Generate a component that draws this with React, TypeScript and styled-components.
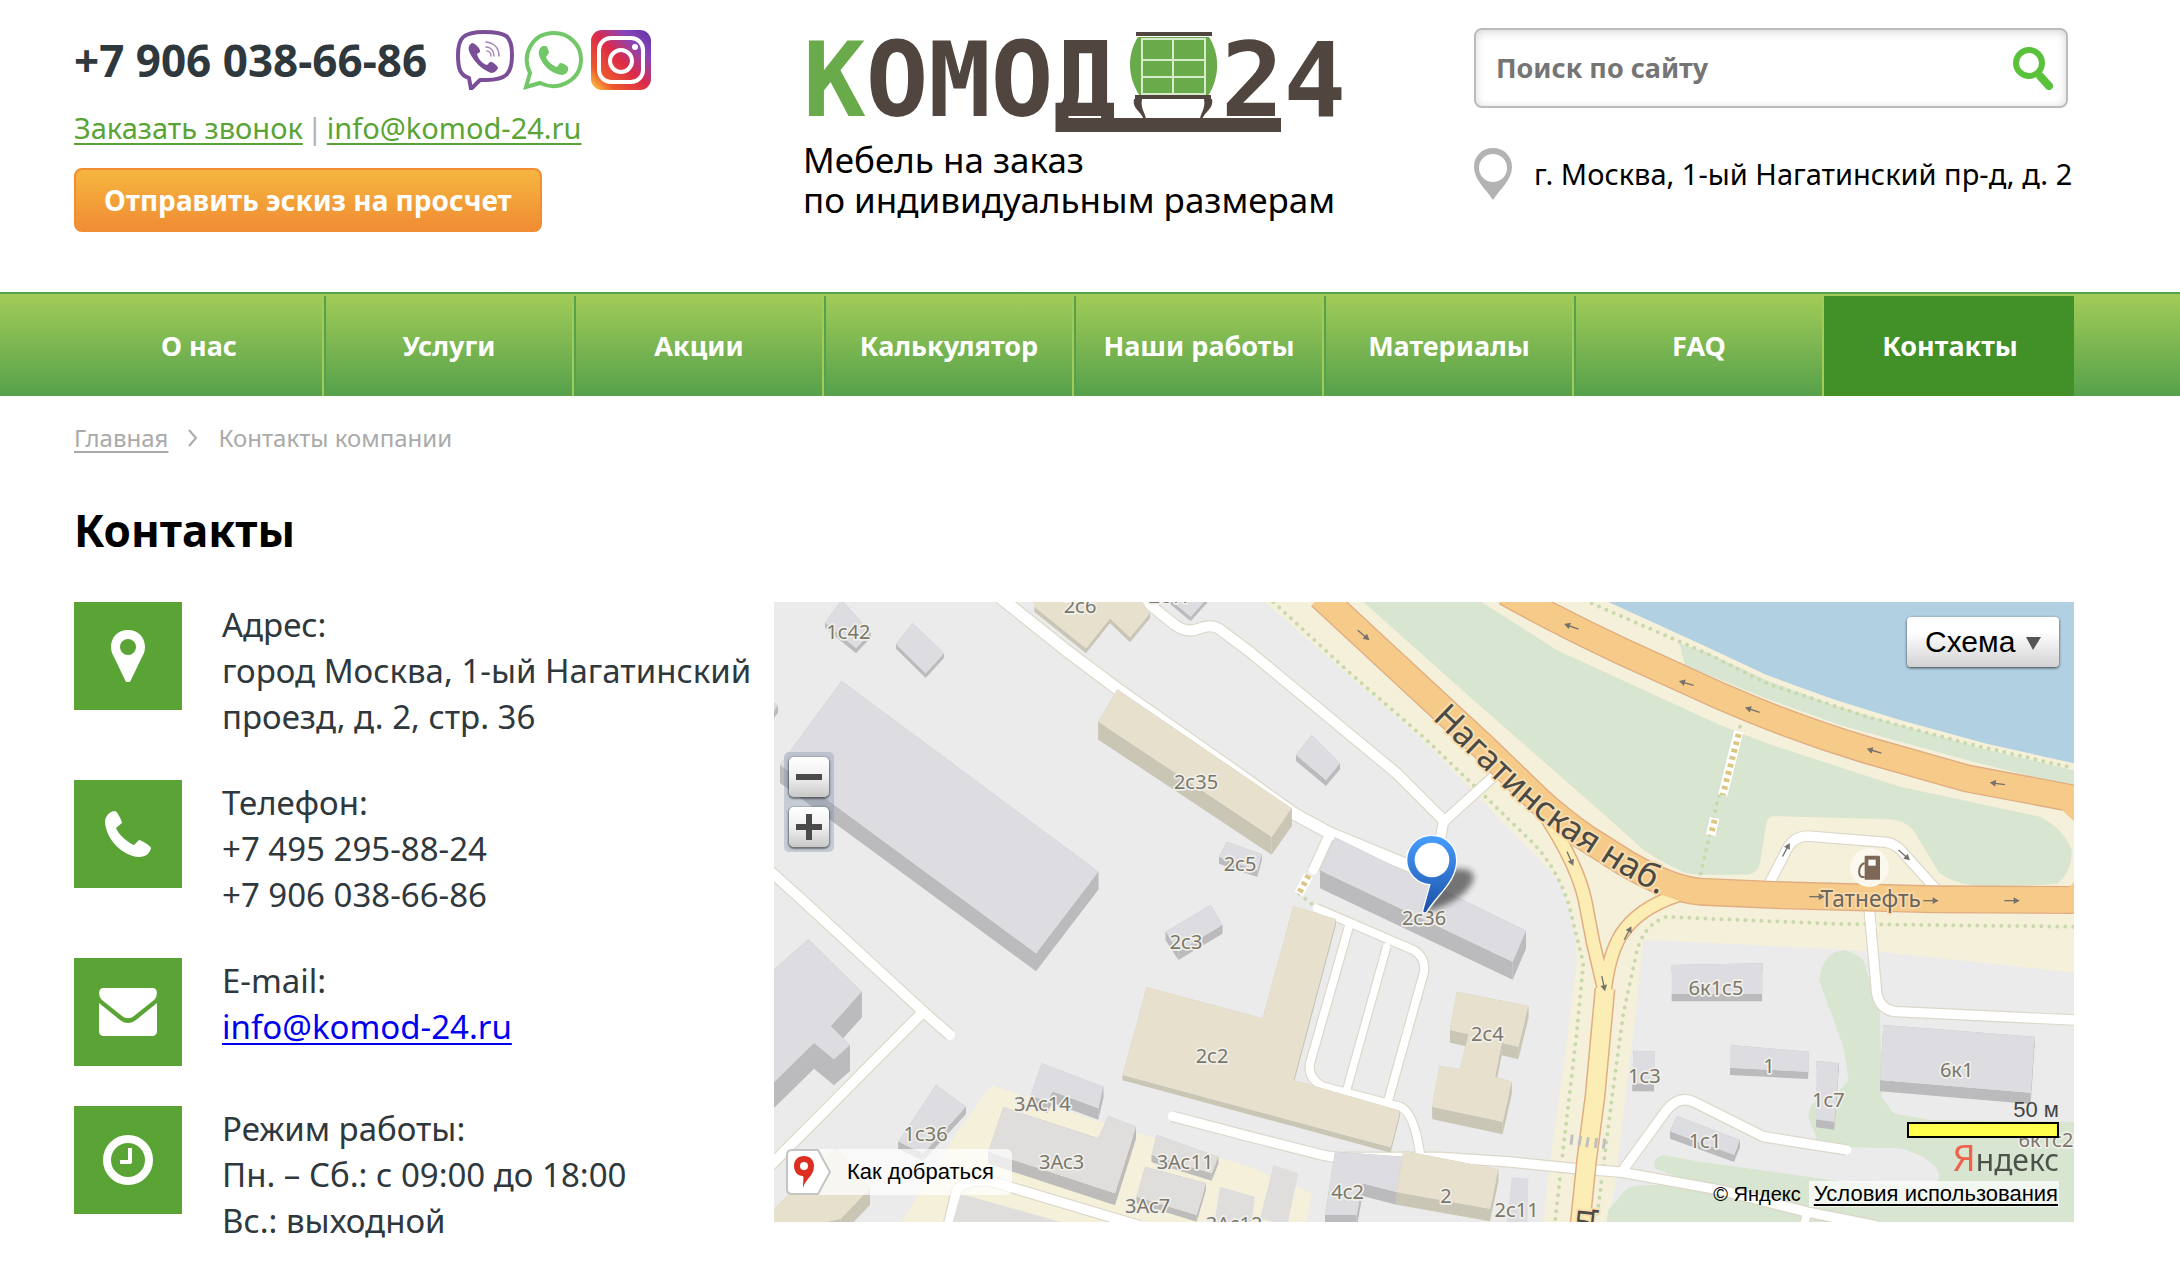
import React from "react";
import styled, { createGlobalStyle } from "styled-components";

const sans = `"Noto Sans", "Open Sans", sans-serif`;
const arial = `"Liberation Sans", Arial, sans-serif`;
const logoFace = `"DejaVu Sans Mono", monospace`;

const GlobalStyle = createGlobalStyle`
  * { box-sizing: border-box; }
  body { margin: 0; background: #fff; color: #2f383d; font-family: ${sans}; }
  h1, p { margin: 0; font-weight: inherit; }
`;

/* ---------- header ---------- */

const Header = styled.header`
  display: grid;
  grid-template-columns: 729fr 671fr 600fr;
  padding: 28px 106px 60px 74px;
`;
const Column = styled.div`
  display: flex;
  flex-direction: column;
  align-items: flex-start;
`;
const PhoneRow = styled.div`
  display: flex;
  align-items: center;
  height: 64px;
  gap: 28px;
`;
const Phone = styled.strong`
  font-size: 44px;
  line-height: 60px;
  white-space: nowrap;
`;
const Messengers = styled.div`
  display: flex;
  gap: 8px;
  a, svg { display: block; }
`;
const LinkRow = styled.div`
  display: flex;
  gap: 4px;
  margin-top: 16px;
  font-size: 29px;
  line-height: 40px;
  color: #b3b3b3;
  white-space: nowrap;
  a { color: #5aa435; text-underline-offset: 4px; text-decoration-thickness: 2px; text-decoration-skip-ink: none; }
`;
const Cta = styled.button`
  height: 64px;
  margin-top: 20px;
  padding: 0 28px;
  border: 2px solid #f18d33;
  border-radius: 8px;
  background: linear-gradient(#f6b63f, #f08c34);
  color: #fff;
  font: bold 28px/40px ${sans};
  white-space: nowrap;
`;
const Brand = styled.a`
  color: #000;
  text-decoration: none;
  svg { display: block; margin-left: 4px; overflow: visible; }
`;
const Tagline = styled.p`
  margin-top: 8px;
  font-size: 35px;
  line-height: 40px;
  white-space: nowrap;
`;
const SearchForm = styled.form`
  display: flex;
  align-items: center;
  align-self: stretch;
  height: 80px;
  margin-right: 6px;
  padding: 0 12px 0 18px;
  border: 2px solid #bbb;
  border-radius: 8px;
  box-shadow: inset 0 2px 10px rgba(0, 0, 0, 0.16);
`;
const SearchInput = styled.input`
  flex: 1;
  min-width: 0;
  border: 0;
  outline: 0;
  background: transparent;
  font: bold 27px/40px ${sans};
  &::placeholder { color: #757575; opacity: 1; }
`;
const IconButton = styled.button`
  padding: 0;
  border: 0;
  background: none;
  svg { display: block; }
`;
const Place = styled.p`
  display: flex;
  align-items: center;
  gap: 22px;
  margin-top: 40px;
  color: #000;
  font-size: 29px;
  line-height: 40px;
  white-space: nowrap;
`;

/* ---------- navigation ---------- */

const Nav = styled.nav`
  padding: 2px 106px 0 74px;
  border-top: 2px solid #56a14b;
  background: linear-gradient(#a2cc58, #56a14b);
`;
const NavList = styled.ul`
  display: grid;
  grid-template-columns: repeat(8, 1fr);
  margin: 0;
  padding: 0;
  list-style: none;
`;
const NavItem = styled.li<{ $active?: boolean }>`
  border-left: 2px solid #56a14b;
  border-right: 2px solid #a2cc58;
  background: ${(p) => (p.$active ? "#419028" : "none")};
  &:first-child { border-left-color: transparent; }
  &:last-child { border-right: 0; border-left-color: #419028; }
  a {
    display: block;
    color: #fff;
    font-size: 27px;
    font-weight: bold;
    line-height: 100px;
    text-align: center;
    text-decoration: none;
    white-space: nowrap;
  }
`;

/* ---------- content ---------- */

const Main = styled.main`
  padding: 22px 106px 20px 74px;
`;
const Crumbs = styled.nav`
  display: flex;
  align-items: center;
  gap: 20px;
  color: #aaa;
  font-size: 24px;
  line-height: 40px;
  a { color: inherit; text-underline-offset: 4px; text-decoration-thickness: 2px; }
`;
const Title = styled.h1`
  margin-top: 40px;
  color: #000;
  font-size: 44px;
  font-weight: bold;
  line-height: 64px;
`;
const Content = styled.div`
  display: grid;
  grid-template-columns: 35% 65%;
  margin-top: 40px;
`;
const Contacts = styled.div`
  display: flex;
  flex-direction: column;
  gap: 40px;
`;
const Contact = styled.section`
  display: flex;
  align-items: flex-start;
  gap: 40px;
`;
const Tile = styled.div`
  display: grid;
  flex: none;
  place-items: center;
  width: 108px;
  height: 108px;
  background: #5aa435;
`;
const Details = styled.p`
  font-size: 33px;
  line-height: 46px;
  a { color: #0000ee; text-underline-offset: 4px; text-decoration-thickness: 2px; text-decoration-skip-ink: none; }
`;

/* ---------- map ---------- */

const MapBox = styled.div`
  position: relative;
  height: 620px;
  overflow: hidden;
  background: #ebebeb;
  font-family: ${arial};
`;
const MapCanvas = styled.svg`
  display: block;
  width: 100%;
  height: 100%;
`;
const LayerPicker = styled.div`
  position: absolute;
  top: 15px;
  right: 15px;
  border-radius: 4px;
  box-shadow: 0 1px 3px rgba(0, 0, 0, 0.7);
  select {
    display: block;
    width: 152px;
    height: 50px;
    padding: 0 0 2px 18px;
    border: 0;
    border-radius: 4px;
    appearance: none;
    background: linear-gradient(#fff 30%, #d2d2d2);
    color: #000;
    font: 30px ${arial};
  }
  svg { position: absolute; top: 20px; right: 18px; pointer-events: none; }
`;
const ZoomPanel = styled.div`
  position: absolute;
  top: 150px;
  left: 10px;
  display: grid;
  gap: 10px;
  padding: 5px;
  border-radius: 5px;
  background: rgba(125, 145, 172, 0.35);
`;
const ZoomButton = styled.button`
  display: grid;
  place-items: center;
  width: 40px;
  height: 40px;
  padding: 0;
  border: 0;
  border-radius: 5px;
  background: linear-gradient(#fff, #f0f0f0 50%, #c8c8c8);
  box-shadow: 0 1px 2px 1px rgba(0, 0, 0, 0.45);
`;
const RouteLink = styled.a`
  position: absolute;
  bottom: 27px;
  left: 12px;
  display: flex;
  align-items: center;
  gap: 16px;
  height: 46px;
  padding-right: 18px;
  border-radius: 6px;
  background: rgba(255, 255, 255, 0.7);
  color: #000;
  font-size: 22px;
  text-decoration: none;
`;
const MapInfo = styled.div`
  position: absolute;
  right: 15px;
  bottom: 15px;
  display: flex;
  flex-direction: column;
  align-items: flex-end;
`;
const Scale = styled.div`
  width: 152px;
  color: #444;
  font-size: 22px;
  line-height: 24px;
  text-align: right;
  &::after {
    content: "";
    display: block;
    height: 12px;
    border: 2px solid #000;
    background: #ffff4d;
  }
`;
const Provider = styled.div`
  color: #3d413c;
  font: 30px/42px ${sans};
  opacity: 0.9;
  span { color: #f0563f; font-size: 36px; line-height: 40px; }
`;
const Copyright = styled.div`
  display: flex;
  gap: 8px;
  color: #000;
  font-size: 20px;
  line-height: 26px;
  a { padding: 0 1px 0 5px; background: rgba(255, 255, 255, 0.7); color: #000; font-size: 22px; text-underline-offset: 3px; text-decoration-thickness: 2px; text-decoration-skip-ink: none; }
`;

/* ---------- drawings ---------- */

const Viber = () => (
  <svg width="60" height="60" viewBox="0 0 60 60" fill="none" stroke="#7b4f98">
    <path d="M29 2C8 2 3 8 3 25c0 14 2 20 11 23l2 11 9-9h6c20 0 26-6 26-25S52 2 29 2z" strokeWidth="4" strokeLinejoin="round" />
    <path d="M17 13c-3 2-4 4-3 8 4 10 12 18 22 22 4 0 6-3 7-5 0-2-6-7-8-6l-3 3c-4-1-9-6-10-11l3-2c1-3-5-9-8-9z" fill="#7b4f98" stroke="none" />
    <path d="M31 12c8 1 13 6 13 14M31 17c5 0 8 4 8 9M32 21c2 0 4 2 4 5" strokeWidth="1.5" strokeLinecap="round" opacity=".7" />
  </svg>
);
const WhatsApp = () => (
  <svg width="60" height="60" viewBox="0 0 60 60" fill="none">
    <path d="M3 57l4-14C-2 25 9 3 31 3c15 0 27 12 27 26 0 21-22 33-41 24z" stroke="#72c768" strokeWidth="4" />
    <path d="M20 16c-3 1-5 5-4 9 3 10 12 19 23 20 4 0 7-4 6-8-2-2-5-4-8-4l-3 4c-5-2-9-5-11-10l3-4c0-2-2-7-3-7z" fill="#72c768" />
  </svg>
);
const Instagram = () => (
  <svg width="60" height="60" viewBox="0 0 60 60" fill="none">
    <defs>
      <linearGradient id="igA" x1="0" y1="1" x2="1" y2="0">
        <stop offset="0" stopColor="#fbd44a" />
        <stop offset=".2" stopColor="#ee5a2b" />
        <stop offset=".5" stopColor="#dc2a48" />
        <stop offset=".75" stopColor="#8b45b8" />
        <stop offset="1" stopColor="#5d34a8" />
      </linearGradient>
    </defs>
    <rect width="60" height="60" rx="11" fill="url(#igA)" />
    <rect x="8" y="8" width="44" height="44" rx="12" stroke="#fff" strokeWidth="4" />
    <circle cx="30" cy="31" r="11" stroke="#fff" strokeWidth="4" />
    <circle cx="44" cy="17" r="3" fill="#fff" />
  </svg>
);

const Logo = () => (
  <svg width="540" height="104" viewBox="0 0 540 104" role="img" aria-label="Комод 24">
    <g fontFamily={logoFace} fontWeight="bold" fontSize="104" fill="#51463f">
      <text x="-4" y="88"><tspan fill="#69aa4b">К</tspan>ОМОД</text>
      <text x="414" y="88">24</text>
    </g>
    <path d="M250 90h224v14H250z" fill="#51463f" />
    <g transform="translate(-12 4)">
      <path d="M343 5h71c11 17 11 40-1 59h-68c-13-19-13-42-2-59z" fill="#69aa4b" />
      <path d="M347 7h63v55h-63zM378 7v55M347 28h63M347 45h63" fill="none" stroke="#d5ebc9" strokeWidth="2" />
      <path d="M341 0h76v4h-76zM340 63h76v4h-76z" fill="#51463f" />
      <path d="M339 67h8c-2 10 4 14 4 21h-2c-2-8-12-11-10-21zM417 67h-8c2 10-4 14-4 21h2c2-8 12-11 10-21z" fill="#51463f" />
    </g>
  </svg>
);

const tileIcons = {
  pin: (
    <svg width="34" height="52" viewBox="0 0 34 52">
      <path fillRule="evenodd" fill="#fff" d="M17 0C7 0 0 7 0 17c0 5 2 8 4 12l10 21c1 3 5 3 6 0l10-21c2-4 4-7 4-12C34 7 27 0 17 0zm0 9a8 8 0 1 1 0 16 8 8 0 0 1 0-16z" />
    </svg>
  ),
  phone: (
    <svg width="46" height="46" viewBox="0 0 46 46">
      <path fill="#fff" d="M10 0C5 0 0 5 0 11c1 17 17 34 34 35 7 0 11-4 12-9 0-2-10-8-12-8l-5 5c-6-2-16-11-18-17l6-5c0-2-5-12-7-12z" />
    </svg>
  ),
  mail: (
    <svg width="58" height="48" viewBox="0 0 58 48" fill="#fff">
      <path d="M4 0h50c5 0 5 8 1 12L35 28c-4 3-8 3-12 0L3 12C-1 8-1 0 4 0z" />
      <path d="M0 15l21 17c5 4 11 4 16 0l21-17v28c0 3-2 5-5 5H5c-3 0-5-2-5-5z" />
    </svg>
  ),
  clock: (
    <svg width="50" height="50" viewBox="0 0 50 50" fill="none" stroke="#fff">
      <circle cx="25" cy="25" r="21" strokeWidth="8" />
      <path d="M27 13v14H17" strokeWidth="4" strokeLinejoin="round" />
    </svg>
  ),
};

/* ---------- map data, in thirds of a pixel ---------- */

type Kind = "gray" | "beige" | "stone";
const roof: Record<Kind, string> = { gray: "#dddce1", beige: "#e6e0cd", stone: "#dfdedd" };
const wall: Record<Kind, string> = { gray: "#bbbbbd", beige: "#cac6b5", stone: "#bdbcbb" };

const buildings: [Kind, number, number[]][] = [
  ["gray", 16, [203, -6, 290, 92, 246, 138, 153, 62]],
  ["gray", 14, [416, 64, 510, 154, 455, 214, 366, 126]],
  ["gray", 54, [203, 237, 973, 809, 786, 1054, 18, 489]],
  ["gray", 22, [-30, 280, 12, 310, -6, 334, -30, 334]],
  ["beige", 15, [781, -10, 1098, -10, 1128, 34, 1068, 106, 1008, 49, 936, 139, 781, 14]],
  ["gray", 14, [1150, -40, 1298, -10, 1250, 44]],
  ["beige", 54, [1030, 262, 1553, 619, 1493, 704, 973, 359]],
  ["gray", 20, [1358, 719, 1463, 757, 1450, 805, 1335, 765]],
  ["gray", 18, [1613, 399, 1698, 484, 1656, 534, 1566, 459]],
  ["gray", 54, [1683, 706, 2256, 986, 2216, 1079, 1638, 805]],
  ["gray", 26, [1310, 909, 1345, 969, 1213, 1048, 1175, 989]],
  ["beige", 16, [1118, 1156, 1466, 1249, 1558, 912, 1686, 952, 1558, 1434, 1878, 1526, 1850, 1636, 1046, 1419]],
  ["beige", 38, [2048, 1169, 2263, 1212, 2233, 1334, 2183, 1322, 2163, 1424, 2213, 1439, 2186, 1559, 1975, 1514, 1996, 1391, 2058, 1402, 2083, 1296, 2028, 1284]],
  ["gray", 78, [-20, 1120, 103, 1012, 263, 1169, 170, 1272, 228, 1329, 180, 1372, 120, 1322, -20, 1460]],
  ["gray", 22, [486, 1449, 576, 1514, 448, 1654, 373, 1619]],
  ["beige", 50, [188, 1639, 288, 1759, 200, 1850, -20, 1900, -20, 1840]],
  ["gray", 34, [803, 1384, 988, 1454, 973, 1519, 835, 1468, 820, 1500, 770, 1480]],
  ["stone", 36, [688, 1516, 973, 1609, 1003, 1542, 1086, 1574, 1023, 1774, 643, 1649]],
  ["stone", 22, [1148, 1599, 1333, 1664, 1313, 1714, 1133, 1659]],
  ["stone", 20, [1113, 1694, 1296, 1744, 1268, 1839, 1088, 1784]],
  ["stone", 0, [560, 1775, 930, 1880, 530, 1880]],
  ["stone", 0, [1338, 1754, 1443, 1784, 1430, 1880, 1320, 1870]],
  ["stone", 0, [1498, 1689, 1573, 1714, 1540, 1870, 1458, 1850]],
  ["gray", 38, [1683, 1649, 1888, 1664, 1868, 1770, 1765, 1744, 1748, 1839, 1653, 1839]],
  ["beige", 38, [1888, 1646, 2173, 1702, 2148, 1820, 1868, 1770]],
  ["gray", 0, [2213, 1726, 2263, 1729, 2260, 1870, 2198, 1870]],
  ["gray", 22, [2693, 1089, 2966, 1084, 2964, 1176, 2693, 1176]],
  ["gray", 24, [2578, 1346, 2643, 1349, 2640, 1444, 2575, 1444]],
  ["gray", 22, [2868, 1329, 3105, 1349, 3102, 1409, 2868, 1397]],
  ["gray", 24, [3128, 1377, 3194, 1384, 3181, 1559, 3126, 1552]],
  ["gray", 34, [3328, 1269, 3781, 1304, 3770, 1472, 3318, 1434]],
  ["gray", 22, [2708, 1542, 2898, 1614, 2880, 1658, 2688, 1588]],
];

const lanes: [number, string][] = [
  [34, "M670-20 888 154 1028 259 1400 520 1560 635 1668 694 2000 830"],
  [30, "M1110-6 1203 69Q1240 95 1275 80 1310 65 1335 80L1428 150 1868 514 2008 654"],
  [28, "M2158 524 2008 660 1998 720"],
  [28, "M1668 694 1618 804"],
  [24, "M1628 919 1918 1044Q1955 1064 1950 1110L1843 1494"],
  [24, "M1723 979 1608 1384Q1600 1430 1648 1454L1878 1514Q1920 1530 1938 1655"],
  [22, "M1838 1034 1718 1464"],
  [28, "M1195 1543 1428 1604 1648 1660Q1680 1668 1720 1666L1998 1666 2198 1679 2398 1699 2538 1710 2838 1764 3100 1830 3300 1870"],
  [28, "M2543 1709 2678 1524Q2715 1480 2758 1499L2968 1604 3218 1644"],
  [30, "M-20 800 78 888 448 1229 528 1299"],
  [30, "M448 1229-20 1700"],
  [28, "M523 1870 548 1765Q565 1735 640 1735L1100 1872"],
  [28, "M3286 925 3308 1174Q3318 1225 3368 1229L3900 1254"],
  [28, "M2983 850 3043 734Q3063 704 3098 702L3338 721Q3362 726 3380 744L3490 866"],
  [24, "M3090 1870 3098 1835"],
];

const yellowRoads: [number, string][] = [
  [36, "M2320 650Q2410 790 2433 894L2458 1024 2490 1160"],
  [36, "M2710 880Q2590 920 2540 1000 2505 1060 2493 1160"],
  [54, "M2493 1160 2463 1484 2438 1674 2418 1870"],
];

const mainRoads = [
  "M1640-18 2003 319 2133 439 2291 592Q2360 655 2433 706L2558 785Q2690 862 2778 869L3028 880 3478 892 3910 894",
  "M2195-30Q2360 62 2548 150L2838 282 2928 320Q3100 390 3278 444L3578 529 3910 592",
];

const trails = [
  "M1498 0 1718 204 1958 414 2098 549 2278 724Q2350 800 2385 910L2428 1084 2408 1294 2373 1594 2343 1860",
  "M3898 974 3200 966 2778 949 2678 944Q2600 970 2583 1074L2548 1234 2513 1494 2468 1854",
  "M2453 4 2800 155 2978 244 3278 344 3578 424 3900 499",
  "M2898 374 2830 600 2778 824",
  "M1575 875 1618 910",
];

const labels: [number, number, string][] = [
  [223, 112, "1с42"], [918, 32, "2с6"], [1190, 4, "2с17"], [1266, 562, "2с35"], [1398, 806, "2с5"],
  [1950, 970, "2с36"], [1236, 1042, "2с3"], [1314, 1384, "2с2"], [805, 1526, "3Ас14"], [455, 1618, "1с36"],
  [863, 1701, "3Ас3"], [1233, 1701, "3Ас11"], [1121, 1832, "3Ас7"], [1380, 1887, "3Ас12"], [2140, 1317, "2с4"],
  [1721, 1790, "4с2"], [2016, 1802, "2"], [2228, 1844, "2с11"], [2826, 1180, "6к1с5"], [2611, 1442, "1с3"],
  [2985, 1412, "1"], [3163, 1514, "1с7"], [3548, 1424, "6к1"], [2793, 1638, "1с1"], [3816, 1634, "6к1с2"],
];

const arrows: [number, number, number][] = [
  [1768, 99, 40], [2393, 74, 200], [2738, 244, 197], [2936, 324, 198], [3301, 447, 196], [3671, 545, 188],
  [3036, 744, -62], [3390, 759, 42], [3470, 896, 0], [3713, 896, 0], [3128, 884, 0], [2388, 769, 66],
  [2561, 994, -62], [2488, 1144, 78],
];

const pts = (a: number[], dy = 0) => {
  const out: string[] = [];
  for (let i = 0; i < a.length; i += 2) out.push(`${a[i]},${a[i + 1] + dy}`);
  return out;
};

const Building = ({ kind, height, shape }: { kind: Kind; height: number; shape: number[] }) => {
  const top = pts(shape);
  const base = pts(shape, height);
  return (
    <g>
      {height > 0 &&
        top.map((p, i) => {
          const n = (i + 1) % top.length;
          return <polygon key={i} points={`${p} ${top[n]} ${base[n]} ${base[i]}`} fill={wall[kind]} />;
        })}
      <polygon points={top.join(" ")} fill={roof[kind]} />
    </g>
  );
};

const MapDrawing = () => (
  <MapCanvas viewBox="0 0 3900 1860" preserveAspectRatio="xMidYMid slice" role="img" aria-label="Карта проезда">
    <defs>
      <linearGradient id="mark" x1="0" y1="0" x2="0" y2="1">
        <stop offset="0" stopColor="#469dff" />
        <stop offset="1" stopColor="#1c50a6" />
      </linearGradient>
      <filter id="soft" x="-50%" y="-50%" width="200%" height="200%">
        <feGaussianBlur stdDeviation="9" />
      </filter>
      <path id="street" d="M1974 350 2163 533Q2290 655 2400 725L2530 808 2720 915" />
    </defs>

    <path fill="#f5f0da" d="M1473 0 1958 424 2258 734Q2340 810 2360 850 2410 960 2408 1084L2373 1364 2328 1684 2308 1860H2498L2523 1754 2548 1534 2578 1294 2608 1014 2838 1024 3318 1049 3900 1112V0z" />
    <path fill="#f5f0da" d="M383 1860 550 1590 653 1449 978 1560 1428 1694 1613 1774 1598 1860z" />
    <g fill="#d8e5d0">
      <path d="M1768 0H2123L2348 144 2838 369 2978 424 3378 554 3798 644Q3870 680 3893 744 3895 810 3850 845 3750 852 3638 852 3540 850 3493 809L3418 684Q3390 655 3350 652L2998 642Q2982 645 2978 659L2958 784Q2950 815 2920 818H2778L2738 814Q2640 770 2598 734L2498 644 2098 294z" />
      <path d="M2716 124 2800 152 2978 235 3178 310 3378 370 3628 440 3900 505V555L3600 480 3200 370 2978 290 2733 190z" />
      <path d="M3208 1044Q3145 1054 3135 1134L3208 1334Q3218 1384 3223 1434L3198 1464Q3100 1490 3103 1544L3130 1614 3218 1636 3378 1639Q3490 1670 3496 1724L3478 1758Q3330 1745 3208 1739L2778 1679 2668 1659Q2630 1670 2645 1700L2760 1745 2620 1750Q2570 1750 2555 1764L2503 1824 2498 1860H3900V1559L3468 1554 3358 1534 3323 1484 3318 1234 3268 1074Q3240 1050 3208 1044z" />
    </g>
    <path fill="#b1d0e2" d="M2503 0 2778 125 2978 219 3178 292 3378 354 3638 425 3900 484V0z" />

    <g fill="none" stroke="#c8d9ab" strokeWidth="12" strokeLinecap="round" strokeDasharray="0 24">
      {trails.map((d) => <path key={d} d={d} />)}
    </g>
    <g fill="none" strokeWidth="28">
      <path d="M2894 388 2846 580M2822 648 2810 700M1604 820 1574 876" stroke="#fff" />
      <path d="M2894 396 2846 580M2822 654 2810 700M1604 820 1574 876" stroke="#dcc684" strokeWidth="18" strokeDasharray="11 12" />
    </g>

    <g fill="none" stroke="#dcd7c9" strokeLinejoin="round">
      {lanes.map(([w, d]) => <path key={d} d={d} strokeWidth={w + 7} />)}
    </g>
    <g fill="none" stroke="#fff" strokeLinejoin="round" strokeLinecap="round">
      {lanes.map(([w, d]) => <path key={d} d={d} strokeWidth={w} />)}
    </g>
    <g fill="none" stroke="#e0ae83">
      {yellowRoads.map(([w, d]) => <path key={d} d={d} strokeWidth={w + 9} />)}
      {mainRoads.map((d) => <path key={d} d={d} strokeWidth="84" />)}
    </g>
    <g fill="none" stroke="#fbedb4">
      {yellowRoads.map(([w, d]) => <path key={d} d={d} strokeWidth={w} />)}
    </g>
    <g fill="none" stroke="#f6ca89">
      {mainRoads.map((d) => <path key={d} d={d} strokeWidth="76" />)}
    </g>
    <path fill="#f6ca89" d="M3860 620 3900 658V600zM3886 856 3900 840V880z" />
    <path d="M3286 932 3292 980" stroke="#fff" strokeWidth="28" />
    <path d="M2395 1598 2391 1628M2420 1602 2415 1632M2443 1606 2438 1636M2468 1608 2464 1638M2492 1610 2488 1640" stroke="#c2bfc0" strokeWidth="9" />

    {buildings.map(([kind, height, shape]) => (
      <Building key={shape.join()} kind={kind} height={height} shape={shape} />
    ))}

    <g stroke="#75716b" fill="#75716b">
      {arrows.map(([x, y, r]) => (
        <g key={`${x}-${y}`} transform={`translate(${x} ${y}) rotate(${r})`}>
          <path d="M-22 0H8" strokeWidth="4" />
          <path d="M6-10 24 0 6 10z" stroke="none" />
        </g>
      ))}
    </g>

    <circle cx="3286" cy="797" r="58" fill="#fbf8ee" />
    <path d="M3272 765q0-4 4-4h38q4 0 4 4v68h-46z" fill="#7d6858" />
    <path d="M3283 773h22v18h-22z" fill="#fff" />
    <path d="M3272 783c-22 8-20 44-6 42h6" fill="none" stroke="#7d6858" strokeWidth="6" />

    <g fontFamily={sans} textAnchor="middle" fill="#7a776c" stroke="#f1efe9" strokeWidth="10" strokeLinejoin="round" paintOrder="stroke">
      <g fontSize="60">
        {labels.map(([x, y, t]) => <text key={t} x={x} y={y}>{t}</text>)}
      </g>
      <text x="3290" y="916" fontSize="68" fill="#6b655c" stroke="#f9dcae">Татнефть</text>
    </g>
    <g fontFamily={sans} fill="#4a4944" stroke="#f8deb0" strokeWidth="12" strokeLinejoin="round" paintOrder="stroke">
      <text fontSize="103"><textPath href="#street">Нагатинская наб.</textPath></text>
      <text fontSize="92" transform="translate(2456 1878) rotate(-84)">д</text>
    </g>

    <path d="M1953 931Q2000 800 2050 800 2120 800 2090 850 2060 900 1953 931z" fill="#000" opacity=".5" filter="url(#soft)" />
    <path fillRule="evenodd" fill="url(#mark)" stroke="#fff" strokeWidth="8" paintOrder="stroke" d="M1974 702a72 72 0 0 1 72 72c0 64-52 96-90 156-6 2-8 0-8-4l22-80a72 72 0 1 1 4-144z" />
    <circle cx="1974" cy="774" r="52" fill="#fff" />
  </MapCanvas>
);

/* ---------- page ---------- */

const menu = ["О нас", "Услуги", "Акции", "Калькулятор", "Наши работы", "Материалы", "FAQ", "Контакты"];

export default function App() {
  return (
    <>
      <GlobalStyle />
      <Header>
        <Column>
          <PhoneRow>
            <Phone>+7 906 038-66-86</Phone>
            <Messengers>
              <a href="#viber" aria-label="Viber"><Viber /></a>
              <a href="#whatsapp" aria-label="WhatsApp"><WhatsApp /></a>
              <a href="#instagram" aria-label="Instagram"><Instagram /></a>
            </Messengers>
          </PhoneRow>
          <LinkRow>
            <a href="#call">Заказать звонок</a>
            <span>|</span>
            <a href="mailto:info@komod-24.ru">info@komod-24.ru</a>
          </LinkRow>
          <Cta type="button">Отправить эскиз на просчет</Cta>
        </Column>
        <Column>
          <Brand href="#home">
            <Logo />
            <Tagline>Мебель на заказ<br />по индивидуальным размерам</Tagline>
          </Brand>
        </Column>
        <Column>
          <SearchForm role="search">
            <SearchInput type="search" aria-label="Поиск по сайту" placeholder="Поиск по сайту" />
            <IconButton type="button" aria-label="Найти">
              <svg width="42" height="44" viewBox="0 0 42 44" fill="none" stroke="#5ac13a">
                <circle cx="17" cy="17" r="13" strokeWidth="6" />
                <path d="M28 30l9 10" strokeWidth="8" strokeLinecap="round" />
              </svg>
            </IconButton>
          </SearchForm>
          <Place>
            <svg width="38" height="52" viewBox="0 0 38 52">
              <path fillRule="evenodd" fill="#b3b3b3" d="M19 0C8 0 0 8 0 19c0 13 12 22 19 33 7-11 19-20 19-33C38 8 30 0 19 0zm0 6a14 14 0 1 1 0 28 14 14 0 0 1 0-28z" />
            </svg>
            г. Москва, 1-ый Нагатинский пр-д, д. 2
          </Place>
        </Column>
      </Header>

      <Nav>
        <NavList>
          {menu.map((name, i) => (
            <NavItem key={name} $active={i === 7}><a href={`#${i}`}>{name}</a></NavItem>
          ))}
        </NavList>
      </Nav>

      <Main>
        <Crumbs>
          <a href="#home">Главная</a>
          <svg width="10" height="18" viewBox="0 0 10 18" fill="none" stroke="#aaa" strokeWidth="2"><path d="M1 1l7 8-7 8" /></svg>
          <span>Контакты компании</span>
        </Crumbs>
        <Title>Контакты</Title>
        <Content>
          <Contacts>
            <Contact>
              <Tile>{tileIcons.pin}</Tile>
              <Details>Адрес:<br />город Москва, 1-ый Нагатинский<br />проезд, д. 2, стр. 36</Details>
            </Contact>
            <Contact>
              <Tile>{tileIcons.phone}</Tile>
              <Details>Телефон:<br />+7 495 295-88-24<br />+7 906 038-66-86</Details>
            </Contact>
            <Contact>
              <Tile>{tileIcons.mail}</Tile>
              <Details>E-mail:<br /><a href="mailto:info@komod-24.ru">info@komod-24.ru</a></Details>
            </Contact>
            <Contact>
              <Tile>{tileIcons.clock}</Tile>
              <Details>Режим работы:<br />Пн. – Сб.: с 09:00 до 18:00<br />Вс.: выходной</Details>
            </Contact>
          </Contacts>
          <MapBox>
            <MapDrawing />
            <ZoomPanel>
              <ZoomButton type="button" aria-label="Уменьшить">
                <svg width="26" height="26" viewBox="0 0 26 26"><path d="M0 10h26v6H0z" fill="#4a4a4a" /></svg>
              </ZoomButton>
              <ZoomButton type="button" aria-label="Увеличить">
                <svg width="26" height="26" viewBox="0 0 26 26"><path d="M10 0h6v10h10v6H16v10h-6V16H0v-6h10z" fill="#4a4a4a" /></svg>
              </ZoomButton>
            </ZoomPanel>
            <LayerPicker>
              <select aria-label="Слой карты"><option>Схема</option></select>
              <svg width="15" height="13" viewBox="0 0 15 13"><path d="M0 0h15L7 13z" fill="#555" /></svg>
            </LayerPicker>
            <RouteLink href="#route">
              <svg width="45" height="46" viewBox="0 0 45 46">
                <path d="M6 1h26l12 22-12 22H6q-5 0-5-5V6q0-5 5-5z" fill="#fff" stroke="#c4c4c4" strokeWidth="2" />
                <path fillRule="evenodd" fill="#dc2f22" d="M18 7c6 0 10 4 10 10 0 10-8 12-11 22 0-6 1-10 0-12-6 0-9-5-9-10C8 11 12 7 18 7zm0 6a4 4 0 1 0 0 8 4 4 0 0 0 0-8z" />
              </svg>
              Как добраться
            </RouteLink>
            <MapInfo>
              <Scale>50 м</Scale>
              <Provider><span>Я</span>ндекс</Provider>
              <Copyright>© Яндекс <a href="#terms">Условия использования</a></Copyright>
            </MapInfo>
          </MapBox>
        </Content>
      </Main>
    </>
  );
}
